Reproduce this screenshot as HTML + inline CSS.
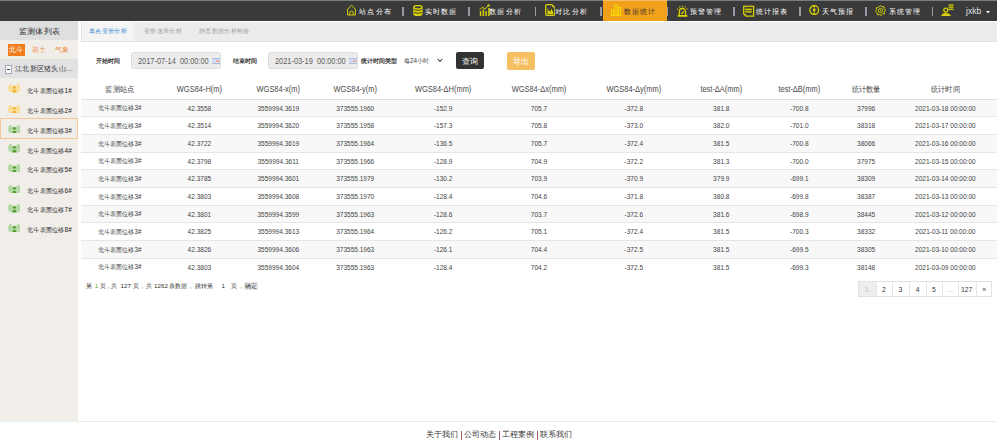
<!DOCTYPE html>
<html><head><meta charset="utf-8"><style>
*{margin:0;padding:0;box-sizing:border-box}
html,body{width:1000px;height:446px;overflow:hidden;background:#fff;font-family:"Liberation Sans",sans-serif;color:#333}
div,span,svg{position:absolute}
.nav{top:1.8px;height:20px;line-height:20px;font-size:7.2px;letter-spacing:1.2px;color:#fff;white-space:nowrap;margin-left:-0.3px}
.sep{top:7px;width:1.4px;height:9px;background:#9a9aa4;margin-left:-0.7px}
.t{white-space:nowrap}
#tbl div.c{text-align:center;white-space:nowrap}
</style></head><body>
<div style="left:0;top:0;width:997px;height:21px;background:#3a3a3a;border-top:1px solid #7b7c80"></div>
<div style="left:602.5px;top:0;width:64.5px;height:21px;background:#f3a01a;border-top:1px solid #f4bf6a"></div>
<div class="nav" style="left:359.5px;color:#fff">站点分布</div>
<div class="nav" style="left:425px;color:#fff">实时数据</div>
<div class="nav" style="left:489.5px;color:#fff">数据分析</div>
<div class="nav" style="left:555.5px;color:#fff">对比分析</div>
<div class="nav" style="left:624px;color:#333">数据统计</div>
<div class="nav" style="left:690px;color:#fff">预警管理</div>
<div class="nav" style="left:756px;color:#fff">统计报表</div>
<div class="nav" style="left:822px;color:#fff">天气预报</div>
<div class="nav" style="left:889px;color:#fff">系统管理</div>
<div class="sep" style="left:403px"></div>
<div class="sep" style="left:469px"></div>
<div class="sep" style="left:535.5px"></div>
<div class="sep" style="left:601px"></div>
<div class="sep" style="left:667.5px"></div>
<div class="sep" style="left:734px"></div>
<div class="sep" style="left:800px"></div>
<div class="sep" style="left:866px"></div>
<div class="sep" style="left:932.5px"></div>
<svg style="left:346px;top:4px" width="11" height="12" viewBox="0 0 11 12"><path d="M1 6 L5.5 1.2 L10 6 M1.6 5.4 V11 H9.4 V5.4 M3.8 11 V8 Q5.5 5.8 7.2 8 V11" fill="none" stroke="#d6d000" stroke-width="1"/></svg>
<svg style="left:413px;top:4.9px" width="9.8" height="10.9" viewBox="0 0 9.8 10.9"><rect x="0.1" y="0" width="9.6" height="10.9" rx="2.8" fill="#d6d000"/><ellipse cx="4.9" cy="2.2" rx="3.3" ry="0.95" fill="#3a3a3a"/><path d="M0.5 4.5 Q4.9 6.4 9.3 4.5 M0.5 7.4 Q4.9 9.3 9.3 7.4" fill="none" stroke="#3a3a3a" stroke-width="0.9"/></svg>
<svg style="left:479px;top:4px" width="11" height="12" viewBox="0 0 11 12"><path d="M0.5 6 L3.5 3 L6 5 L9.5 1.3" fill="none" stroke="#d6d000" stroke-width="1"/><circle cx="9.6" cy="1.4" r="1.2" fill="#d6d000"/><rect x="0.8" y="7" width="1.5" height="5" fill="#d6d000"/><rect x="3.6" y="5.3" width="1.5" height="6.7" fill="#d6d000"/><rect x="6.4" y="7" width="1.5" height="5" fill="#d6d000"/><rect x="9.2" y="4" width="1.5" height="8" fill="#d6d000"/></svg>
<svg style="left:544.6px;top:4px" width="10.6" height="12" viewBox="0 0 10.6 12"><path d="M1.9 0.7 H6.9 L9.9 3.7 V10.1 Q9.9 11.3 8.7 11.3 H1.9 Q0.7 11.3 0.7 10.1 V1.9 Q0.7 0.7 1.9 0.7 Z" fill="none" stroke="#d6d000" stroke-width="1.3"/><path d="M2.4 10.2 V4.8 L3.2 4.4 V7.4 L4.4 6.2 L5.4 8 L6.4 4.6 L8.4 8.6 V10.2 Z" fill="#d6d000"/><circle cx="7.6" cy="2.6" r="0.6" fill="#d6d000"/></svg>
<svg style="left:611px;top:4px" width="10" height="12" viewBox="0 0 10 12"><rect x="0.5" y="6" width="2.2" height="5.5" fill="none" stroke="#f5e400" stroke-width="0.9"/><rect x="3.9" y="1" width="2.2" height="10.5" fill="none" stroke="#f5e400" stroke-width="0.9"/><rect x="7.3" y="3.5" width="2.2" height="8" fill="none" stroke="#f5e400" stroke-width="0.9"/></svg>
<svg style="left:677px;top:5px" width="11" height="12" viewBox="0 0 11 12"><circle cx="2.6" cy="1.9" r="0.7" fill="#d6d000"/><circle cx="5.3" cy="1.5" r="0.7" fill="#d6d000"/><circle cx="8" cy="1.9" r="0.7" fill="#d6d000"/><circle cx="0.7" cy="3.9" r="0.7" fill="#d6d000"/><circle cx="9.9" cy="3.9" r="0.7" fill="#d6d000"/><path d="M2.3 10.2 V6.6 A3.1 3.1 0 0 1 8.5 6.6 V10.2" fill="none" stroke="#d6d000" stroke-width="1.3"/><path d="M3.9 7.6 L5.1 8.6 L6.9 6.1" fill="none" stroke="#d6d000" stroke-width="1.1"/><rect x="0.6" y="10" width="9.8" height="1.8" fill="#d6d000"/></svg>
<svg style="left:743px;top:5px" width="12" height="12" viewBox="0 0 12 12"><path d="M0.7 1.3 H10.6 V11.2 H3 L0.7 8.9 Z" fill="none" stroke="#d6d000" stroke-width="1.3"/><path d="M0.7 8.9 H3 V11.2 Z" fill="#d6d000"/><rect x="2.2" y="3.6" width="6.6" height="1.7" fill="#d6d000"/><rect x="2.2" y="6.2" width="6.6" height="1.4" fill="#d6d000"/><path d="M2.6 0 V2.3 M7.7 0 V2.3" stroke="#8aa02a" stroke-width="1"/><path d="M3.4 0.3 V2.3 M8.5 0.3 V2.3" stroke="#c88a20" stroke-width="0.7"/></svg>
<svg style="left:809.4px;top:4.8px" width="10.4" height="10.2" viewBox="0 0 10.4 10.2"><circle cx="5.2" cy="5.1" r="4.4" fill="none" stroke="#d6d000" stroke-width="1.3"/><circle cx="5.2" cy="5.1" r="1.5" fill="#d6d000"/><path d="M5.2 0.5 V9.7" stroke="#d6d000" stroke-width="0.9"/><circle cx="5.2" cy="0.9" r="0.9" fill="#d6d000"/><circle cx="5.2" cy="9.3" r="0.9" fill="#d6d000"/></svg>
<svg style="left:875px;top:5px" width="11" height="11" viewBox="0 0 11 11"><path d="M5.5 0.6 L7 1.8 L8.9 1.6 L9.2 3.5 L10.4 5 L9.5 6.6 L9.6 8.7 L7.6 9 L6.2 10.4 L4.5 9.6 L2.5 9.8 L2 7.9 L0.6 6.4 L1.4 4.7 L1.6 2.6 L3.6 2 Z" fill="none" stroke="#d6d000" stroke-width="1"/><circle cx="5.5" cy="5.6" r="2.2" fill="none" stroke="#d6d000" stroke-width="0.9"/><circle cx="5.5" cy="5.6" r="0.8" fill="#d6d000"/></svg>
<svg style="left:940.5px;top:3.5px" width="13" height="12.5" viewBox="0 0 13 12.5"><circle cx="4.8" cy="6.1" r="2" fill="none" stroke="#d6d000" stroke-width="1.3"/><path d="M0.3 12 Q0.8 9.2 4.8 9 Q8.8 9.2 10 12 Z" fill="#d6d000"/><rect x="7.5" y="0.4" width="5" height="1.3" fill="#d6d000"/><rect x="7.5" y="2.5" width="5" height="1.3" fill="#d6d000"/><rect x="7.5" y="4.6" width="5" height="1.3" fill="#d6d000"/></svg>
<div class="nav" style="left:966.3px;font-size:8.5px;letter-spacing:0;top:1px;color:#dfe4ea">jxkb</div>
<svg style="left:986px;top:10.5px" width="4" height="3" viewBox="0 0 4 3"><path d="M0 0 H4 L2 2.5 Z" fill="#fff"/></svg>
<div style="left:0;top:21px;width:78px;height:400px;background:#f1eeea"></div>
<div style="left:0;top:21px;width:78px;height:19px;background:#dfdfdf"></div>
<div class="t" style="left:18.6px;top:21.6px;height:19px;font-size:8.4px;letter-spacing:0.45px;line-height:19px;color:#2a2a2a">监测体列表</div>
<div style="left:8px;top:43.5px;width:16.5px;height:12px;background:#f07d1e"></div>
<div class="t" style="left:8px;top:43.5px;width:16.5px;height:12px;line-height:12px;font-size:6.8px;color:#fff;text-align:center">北斗</div>
<div class="t" style="left:31.5px;top:43.5px;width:14.5px;height:12px;line-height:12px;font-size:6.8px;color:#f0913c;text-align:center">岩土</div>
<div class="t" style="left:54.5px;top:43.5px;width:14.5px;height:12px;line-height:12px;font-size:6.8px;color:#f0913c;text-align:center">气象</div>
<div style="left:0;top:59px;width:78px;height:19px;background:#e2e2e3"></div>
<div style="left:5px;top:65px;width:7px;height:8.5px;border:1px solid #a8a8b8;background:#fafafa"></div>
<div style="left:6.8px;top:68.8px;width:3.4px;height:1px;background:#444"></div>
<div class="t" style="left:15px;font-size:7.35px;letter-spacing:0.3px;line-height:20px;top:58.6px;color:#333">江北新区猪头山...</div>
<svg style="left:7.6px;top:84.4px" width="12.8" height="8.6" viewBox="0 0 12.8 8.6"><ellipse cx="3" cy="4.1" rx="2.9" ry="4.1" fill="#f9dc95"/><ellipse cx="9.8" cy="4.1" rx="2.9" ry="4.1" fill="#f9dc95"/><path d="M3.8 -0.2 L6.4 4.4 L9 -0.2 M4.4 8.6 L3.6 6.5 M8.4 8.6 L9.2 6.5" fill="none" stroke="#f3f0ea" stroke-width="1.1"/><circle cx="6.4" cy="3.2" r="1.5" fill="#f2b32a"/><path d="M3.9 8.6 Q4.2 5.6 6.4 5.4 Q8.6 5.6 8.9 8.6 Z" fill="#f2b32a"/></svg>
<div class="t" style="left:27px;top:80.7px;font-size:6.4px;letter-spacing:0.25px;line-height:20px;font-weight:500;color:#222">北斗表面位移1#</div>
<svg style="left:7.6px;top:104.5px" width="12.8" height="8.6" viewBox="0 0 12.8 8.6"><ellipse cx="3" cy="4.1" rx="2.9" ry="4.1" fill="#f9dc95"/><ellipse cx="9.8" cy="4.1" rx="2.9" ry="4.1" fill="#f9dc95"/><path d="M3.8 -0.2 L6.4 4.4 L9 -0.2 M4.4 8.6 L3.6 6.5 M8.4 8.6 L9.2 6.5" fill="none" stroke="#f3f0ea" stroke-width="1.1"/><circle cx="6.4" cy="3.2" r="1.5" fill="#f2b32a"/><path d="M3.9 8.6 Q4.2 5.6 6.4 5.4 Q8.6 5.6 8.9 8.6 Z" fill="#f2b32a"/></svg>
<div class="t" style="left:27px;top:100.8px;font-size:6.4px;letter-spacing:0.25px;line-height:20px;font-weight:500;color:#222">北斗表面位移2#</div>
<div style="left:0;top:118.2px;width:77.5px;height:21px;border:1px solid #f4c69a"></div>
<svg style="left:7.6px;top:124.9px" width="12.8" height="8.6" viewBox="0 0 12.8 8.6"><ellipse cx="3" cy="4.1" rx="2.9" ry="4.1" fill="#b2d9a3"/><ellipse cx="9.8" cy="4.1" rx="2.9" ry="4.1" fill="#b2d9a3"/><path d="M3.8 -0.2 L6.4 4.4 L9 -0.2 M4.4 8.6 L3.6 6.5 M8.4 8.6 L9.2 6.5" fill="none" stroke="#f3f0ea" stroke-width="1.1"/><circle cx="6.4" cy="3.2" r="1.5" fill="#55a035"/><path d="M3.9 8.6 Q4.2 5.6 6.4 5.4 Q8.6 5.6 8.9 8.6 Z" fill="#55a035"/></svg>
<div class="t" style="left:27px;top:121.2px;font-size:6.4px;letter-spacing:0.25px;line-height:20px;font-weight:500;color:#222">北斗表面位移3#</div>
<svg style="left:7.6px;top:144.4px" width="12.8" height="8.6" viewBox="0 0 12.8 8.6"><ellipse cx="3" cy="4.1" rx="2.9" ry="4.1" fill="#b2d9a3"/><ellipse cx="9.8" cy="4.1" rx="2.9" ry="4.1" fill="#b2d9a3"/><path d="M3.8 -0.2 L6.4 4.4 L9 -0.2 M4.4 8.6 L3.6 6.5 M8.4 8.6 L9.2 6.5" fill="none" stroke="#f3f0ea" stroke-width="1.1"/><circle cx="6.4" cy="3.2" r="1.5" fill="#55a035"/><path d="M3.9 8.6 Q4.2 5.6 6.4 5.4 Q8.6 5.6 8.9 8.6 Z" fill="#55a035"/></svg>
<div class="t" style="left:27px;top:140.7px;font-size:6.4px;letter-spacing:0.25px;line-height:20px;font-weight:500;color:#222">北斗表面位移4#</div>
<svg style="left:7.6px;top:163.8px" width="12.8" height="8.6" viewBox="0 0 12.8 8.6"><ellipse cx="3" cy="4.1" rx="2.9" ry="4.1" fill="#b2d9a3"/><ellipse cx="9.8" cy="4.1" rx="2.9" ry="4.1" fill="#b2d9a3"/><path d="M3.8 -0.2 L6.4 4.4 L9 -0.2 M4.4 8.6 L3.6 6.5 M8.4 8.6 L9.2 6.5" fill="none" stroke="#f3f0ea" stroke-width="1.1"/><circle cx="6.4" cy="3.2" r="1.5" fill="#55a035"/><path d="M3.9 8.6 Q4.2 5.6 6.4 5.4 Q8.6 5.6 8.9 8.6 Z" fill="#55a035"/></svg>
<div class="t" style="left:27px;top:160.1px;font-size:6.4px;letter-spacing:0.25px;line-height:20px;font-weight:500;color:#222">北斗表面位移5#</div>
<svg style="left:7.6px;top:184.6px" width="12.8" height="8.6" viewBox="0 0 12.8 8.6"><ellipse cx="3" cy="4.1" rx="2.9" ry="4.1" fill="#b2d9a3"/><ellipse cx="9.8" cy="4.1" rx="2.9" ry="4.1" fill="#b2d9a3"/><path d="M3.8 -0.2 L6.4 4.4 L9 -0.2 M4.4 8.6 L3.6 6.5 M8.4 8.6 L9.2 6.5" fill="none" stroke="#f3f0ea" stroke-width="1.1"/><circle cx="6.4" cy="3.2" r="1.5" fill="#55a035"/><path d="M3.9 8.6 Q4.2 5.6 6.4 5.4 Q8.6 5.6 8.9 8.6 Z" fill="#55a035"/></svg>
<div class="t" style="left:27px;top:180.9px;font-size:6.4px;letter-spacing:0.25px;line-height:20px;font-weight:500;color:#222">北斗表面位移6#</div>
<svg style="left:7.6px;top:204.1px" width="12.8" height="8.6" viewBox="0 0 12.8 8.6"><ellipse cx="3" cy="4.1" rx="2.9" ry="4.1" fill="#b2d9a3"/><ellipse cx="9.8" cy="4.1" rx="2.9" ry="4.1" fill="#b2d9a3"/><path d="M3.8 -0.2 L6.4 4.4 L9 -0.2 M4.4 8.6 L3.6 6.5 M8.4 8.6 L9.2 6.5" fill="none" stroke="#f3f0ea" stroke-width="1.1"/><circle cx="6.4" cy="3.2" r="1.5" fill="#55a035"/><path d="M3.9 8.6 Q4.2 5.6 6.4 5.4 Q8.6 5.6 8.9 8.6 Z" fill="#55a035"/></svg>
<div class="t" style="left:27px;top:200.4px;font-size:6.4px;letter-spacing:0.25px;line-height:20px;font-weight:500;color:#222">北斗表面位移7#</div>
<svg style="left:7.6px;top:223.5px" width="12.8" height="8.6" viewBox="0 0 12.8 8.6"><ellipse cx="3" cy="4.1" rx="2.9" ry="4.1" fill="#b2d9a3"/><ellipse cx="9.8" cy="4.1" rx="2.9" ry="4.1" fill="#b2d9a3"/><path d="M3.8 -0.2 L6.4 4.4 L9 -0.2 M4.4 8.6 L3.6 6.5 M8.4 8.6 L9.2 6.5" fill="none" stroke="#f3f0ea" stroke-width="1.1"/><circle cx="6.4" cy="3.2" r="1.5" fill="#55a035"/><path d="M3.9 8.6 Q4.2 5.6 6.4 5.4 Q8.6 5.6 8.9 8.6 Z" fill="#55a035"/></svg>
<div class="t" style="left:27px;top:219.8px;font-size:6.4px;letter-spacing:0.25px;line-height:20px;font-weight:500;color:#222">北斗表面位移8#</div>
<div style="left:81px;top:22px;width:916px;height:20px;background:#ececec;border-bottom:1px solid #e2e2e2"></div>
<div style="left:81px;top:22px;width:53px;height:20px;background:#f4f4f4;border-left:1px solid #e4e4e4;border-bottom:1px solid #e2e2e2"></div>
<div class="t" style="left:89px;top:22px;height:18px;line-height:18px;font-size:6.35px;letter-spacing:0.33px;color:#3d8fd8">单点变形分析</div>
<div class="t" style="left:144px;top:22px;height:18px;line-height:18px;font-size:6.35px;letter-spacing:0.33px;color:#a0a0a0">变形速率分析</div>
<div class="t" style="left:199px;top:22px;height:18px;line-height:18px;font-size:6.35px;letter-spacing:0.33px;color:#a0a0a0">静态数据分析检验</div>
<div class="t" style="left:95.8px;top:54.5px;line-height:12px;font-size:6.3px;font-weight:bold;color:#333">开始时间</div>
<div style="left:131.2px;top:51.8px;width:90px;height:17.5px;background:#ececec;border:1px solid #dcdcdc;border-radius:2.5px"></div>
<div class="t" style="left:137.79999999999998px;top:52.7px;height:17.5px;line-height:17.5px;font-size:8.6px;color:#606060;transform:scaleX(0.86);transform-origin:0 50%;white-space:pre">2017-07-14  00:00:00</div>
<div style="left:212.2px;top:57.5px;width:7.7px;height:6.3px;background:#cddcf2;border-top:0.9px solid #a9bfe6;border-bottom:0.7px solid #b4bccb"></div>
<div style="left:216.39999999999998px;top:59.6px;width:2.8px;height:2.6px;border-radius:1px;background:#f2a48c"></div>
<div class="t" style="left:233.3px;top:54.5px;line-height:12px;font-size:6.3px;font-weight:bold;color:#333">结束时间</div>
<div style="left:268.2px;top:51.8px;width:90px;height:17.5px;background:#ececec;border:1px solid #dcdcdc;border-radius:2.5px"></div>
<div class="t" style="left:274.8px;top:52.7px;height:17.5px;line-height:17.5px;font-size:8.6px;color:#606060;transform:scaleX(0.86);transform-origin:0 50%;white-space:pre">2021-03-19  00:00:00</div>
<div style="left:349.2px;top:57.5px;width:7.7px;height:6.3px;background:#cddcf2;border-top:0.9px solid #a9bfe6;border-bottom:0.7px solid #b4bccb"></div>
<div style="left:353.4px;top:59.6px;width:2.8px;height:2.6px;border-radius:1px;background:#f2a48c"></div>
<div class="t" style="left:360.7px;top:54.5px;line-height:12px;font-size:6.3px;font-weight:bold;color:#333">统计时间类型</div>
<div class="t" style="left:404px;top:54.5px;line-height:12px;font-size:6.3px;color:#444">每24小时</div>
<svg style="left:436.5px;top:58px" width="6" height="5" viewBox="0 0 6 5"><path d="M0.8 1 L3 3.5 L5.2 1" fill="none" stroke="#333" stroke-width="1.1"/></svg>
<div class="t" style="left:456.3px;top:51.6px;width:28px;height:17.8px;background:#333;border-radius:2px;color:#fff;font-size:7.6px;line-height:19px;text-align:center">查询</div>
<div class="t" style="left:506.6px;top:51.6px;width:28.4px;height:18px;background:#f5c062;border-radius:2px;color:#fff;font-size:7.6px;line-height:19px;text-align:center">导出</div>
<div style="left:81px;top:99.30px;width:916px;height:17.50px;background:#f8f8f8"></div>
<div style="left:81px;top:134.47px;width:916px;height:17.68px;background:#f8f8f8"></div>
<div style="left:81px;top:169.82px;width:916px;height:17.68px;background:#f8f8f8"></div>
<div style="left:81px;top:205.18px;width:916px;height:17.68px;background:#f8f8f8"></div>
<div style="left:81px;top:240.53px;width:916px;height:17.67px;background:#f8f8f8"></div>
<div style="left:81px;top:98.80px;width:916px;height:1px;background:#e0e0e0"></div>
<div style="left:81px;top:116.30px;width:916px;height:1px;background:#e6e6e6"></div>
<div style="left:81px;top:133.97px;width:916px;height:1px;background:#e6e6e6"></div>
<div style="left:81px;top:151.65px;width:916px;height:1px;background:#e6e6e6"></div>
<div style="left:81px;top:169.32px;width:916px;height:1px;background:#e6e6e6"></div>
<div style="left:81px;top:187.00px;width:916px;height:1px;background:#e6e6e6"></div>
<div style="left:81px;top:204.68px;width:916px;height:1px;background:#e6e6e6"></div>
<div style="left:81px;top:222.35px;width:916px;height:1px;background:#e6e6e6"></div>
<div style="left:81px;top:240.03px;width:916px;height:1px;background:#e6e6e6"></div>
<div style="left:81px;top:257.70px;width:916px;height:1px;background:#e6e6e6"></div>
<div class="t" style="left:81px;top:81px;width:78.0px;height:18px;line-height:18px;font-size:8.2px;color:#4a4a4a;text-align:center;transform:scaleX(0.91)">监测站点</div>
<div class="t" style="left:159px;top:81px;width:80.8px;height:18px;line-height:18px;font-size:8.2px;color:#4a4a4a;text-align:center;transform:scaleX(0.91)">WGS84-H(m)</div>
<div class="t" style="left:239.8px;top:81px;width:76.6px;height:18px;line-height:18px;font-size:8.2px;color:#4a4a4a;text-align:center;transform:scaleX(0.91)">WGS84-x(m)</div>
<div class="t" style="left:316.4px;top:81px;width:78.4px;height:18px;line-height:18px;font-size:8.2px;color:#4a4a4a;text-align:center;transform:scaleX(0.91)">WGS84-y(m)</div>
<div class="t" style="left:394.8px;top:81px;width:96.4px;height:18px;line-height:18px;font-size:8.2px;color:#4a4a4a;text-align:center;transform:scaleX(0.91)">WGS84-ΔH(mm)</div>
<div class="t" style="left:491.2px;top:81px;width:96.0px;height:18px;line-height:18px;font-size:8.2px;color:#4a4a4a;text-align:center;transform:scaleX(0.91)">WGS84-Δx(mm)</div>
<div class="t" style="left:587.2px;top:81px;width:93.6px;height:18px;line-height:18px;font-size:8.2px;color:#4a4a4a;text-align:center;transform:scaleX(0.91)">WGS84-Δy(mm)</div>
<div class="t" style="left:680.8px;top:81px;width:80.6px;height:18px;line-height:18px;font-size:8.2px;color:#4a4a4a;text-align:center;transform:scaleX(0.91)">test-ΔA(mm)</div>
<div class="t" style="left:761.4px;top:81px;width:76.6px;height:18px;line-height:18px;font-size:8.2px;color:#4a4a4a;text-align:center;transform:scaleX(0.91)">test-ΔB(mm)</div>
<div class="t" style="left:838px;top:81px;width:56.2px;height:18px;line-height:18px;font-size:8.2px;color:#4a4a4a;text-align:center;transform:scaleX(0.91)">统计数量</div>
<div class="t" style="left:894.2px;top:81px;width:102.8px;height:18px;line-height:18px;font-size:8.2px;color:#4a4a4a;text-align:center;transform:scaleX(0.91)">统计时间</div>
<div class="t" style="left:81px;top:99.40px;width:78.0px;height:17.50px;line-height:17.50px;font-size:6.3px;color:#3a3a3a;text-align:center">北斗表面位移3#</div>
<div class="t" style="left:159px;top:100.80px;width:80.8px;height:17.50px;line-height:17.50px;font-size:7.1px;transform:scaleX(0.92);color:#444;text-align:center">42.3558</div>
<div class="t" style="left:239.8px;top:100.80px;width:76.6px;height:17.50px;line-height:17.50px;font-size:7.1px;transform:scaleX(0.92);color:#444;text-align:center">3559994.3619</div>
<div class="t" style="left:316.4px;top:100.80px;width:78.4px;height:17.50px;line-height:17.50px;font-size:7.1px;transform:scaleX(0.92);color:#444;text-align:center">373555.1960</div>
<div class="t" style="left:394.8px;top:100.80px;width:96.4px;height:17.50px;line-height:17.50px;font-size:7.1px;transform:scaleX(0.92);color:#444;text-align:center">-152.9</div>
<div class="t" style="left:491.2px;top:100.80px;width:96.0px;height:17.50px;line-height:17.50px;font-size:7.1px;transform:scaleX(0.92);color:#444;text-align:center">705.7</div>
<div class="t" style="left:587.2px;top:100.80px;width:93.6px;height:17.50px;line-height:17.50px;font-size:7.1px;transform:scaleX(0.92);color:#444;text-align:center">-372.8</div>
<div class="t" style="left:680.8px;top:100.80px;width:80.6px;height:17.50px;line-height:17.50px;font-size:7.1px;transform:scaleX(0.92);color:#444;text-align:center">381.8</div>
<div class="t" style="left:761.4px;top:100.80px;width:76.6px;height:17.50px;line-height:17.50px;font-size:7.1px;transform:scaleX(0.92);color:#444;text-align:center">-700.8</div>
<div class="t" style="left:838px;top:100.80px;width:56.2px;height:17.50px;line-height:17.50px;font-size:7.1px;transform:scaleX(0.92);color:#444;text-align:center">37996</div>
<div class="t" style="left:894.2px;top:100.80px;width:102.8px;height:17.50px;line-height:17.50px;font-size:7.1px;transform:scaleX(0.92);color:#444;text-align:center">2021-03-18 00:00:00</div>
<div class="t" style="left:81px;top:116.90px;width:78.0px;height:17.67px;line-height:17.67px;font-size:6.3px;color:#3a3a3a;text-align:center">北斗表面位移3#</div>
<div class="t" style="left:159px;top:118.30px;width:80.8px;height:17.67px;line-height:17.67px;font-size:7.1px;transform:scaleX(0.92);color:#444;text-align:center">42.3514</div>
<div class="t" style="left:239.8px;top:118.30px;width:76.6px;height:17.67px;line-height:17.67px;font-size:7.1px;transform:scaleX(0.92);color:#444;text-align:center">3559994.3620</div>
<div class="t" style="left:316.4px;top:118.30px;width:78.4px;height:17.67px;line-height:17.67px;font-size:7.1px;transform:scaleX(0.92);color:#444;text-align:center">373555.1958</div>
<div class="t" style="left:394.8px;top:118.30px;width:96.4px;height:17.67px;line-height:17.67px;font-size:7.1px;transform:scaleX(0.92);color:#444;text-align:center">-157.3</div>
<div class="t" style="left:491.2px;top:118.30px;width:96.0px;height:17.67px;line-height:17.67px;font-size:7.1px;transform:scaleX(0.92);color:#444;text-align:center">705.8</div>
<div class="t" style="left:587.2px;top:118.30px;width:93.6px;height:17.67px;line-height:17.67px;font-size:7.1px;transform:scaleX(0.92);color:#444;text-align:center">-373.0</div>
<div class="t" style="left:680.8px;top:118.30px;width:80.6px;height:17.67px;line-height:17.67px;font-size:7.1px;transform:scaleX(0.92);color:#444;text-align:center">382.0</div>
<div class="t" style="left:761.4px;top:118.30px;width:76.6px;height:17.67px;line-height:17.67px;font-size:7.1px;transform:scaleX(0.92);color:#444;text-align:center">-701.0</div>
<div class="t" style="left:838px;top:118.30px;width:56.2px;height:17.67px;line-height:17.67px;font-size:7.1px;transform:scaleX(0.92);color:#444;text-align:center">38318</div>
<div class="t" style="left:894.2px;top:118.30px;width:102.8px;height:17.67px;line-height:17.67px;font-size:7.1px;transform:scaleX(0.92);color:#444;text-align:center">2021-03-17 00:00:00</div>
<div class="t" style="left:81px;top:134.57px;width:78.0px;height:17.68px;line-height:17.68px;font-size:6.3px;color:#3a3a3a;text-align:center">北斗表面位移3#</div>
<div class="t" style="left:159px;top:135.97px;width:80.8px;height:17.68px;line-height:17.68px;font-size:7.1px;transform:scaleX(0.92);color:#444;text-align:center">42.3722</div>
<div class="t" style="left:239.8px;top:135.97px;width:76.6px;height:17.68px;line-height:17.68px;font-size:7.1px;transform:scaleX(0.92);color:#444;text-align:center">3559994.3619</div>
<div class="t" style="left:316.4px;top:135.97px;width:78.4px;height:17.68px;line-height:17.68px;font-size:7.1px;transform:scaleX(0.92);color:#444;text-align:center">373555.1964</div>
<div class="t" style="left:394.8px;top:135.97px;width:96.4px;height:17.68px;line-height:17.68px;font-size:7.1px;transform:scaleX(0.92);color:#444;text-align:center">-136.5</div>
<div class="t" style="left:491.2px;top:135.97px;width:96.0px;height:17.68px;line-height:17.68px;font-size:7.1px;transform:scaleX(0.92);color:#444;text-align:center">705.7</div>
<div class="t" style="left:587.2px;top:135.97px;width:93.6px;height:17.68px;line-height:17.68px;font-size:7.1px;transform:scaleX(0.92);color:#444;text-align:center">-372.4</div>
<div class="t" style="left:680.8px;top:135.97px;width:80.6px;height:17.68px;line-height:17.68px;font-size:7.1px;transform:scaleX(0.92);color:#444;text-align:center">381.5</div>
<div class="t" style="left:761.4px;top:135.97px;width:76.6px;height:17.68px;line-height:17.68px;font-size:7.1px;transform:scaleX(0.92);color:#444;text-align:center">-700.8</div>
<div class="t" style="left:838px;top:135.97px;width:56.2px;height:17.68px;line-height:17.68px;font-size:7.1px;transform:scaleX(0.92);color:#444;text-align:center">38066</div>
<div class="t" style="left:894.2px;top:135.97px;width:102.8px;height:17.68px;line-height:17.68px;font-size:7.1px;transform:scaleX(0.92);color:#444;text-align:center">2021-03-16 00:00:00</div>
<div class="t" style="left:81px;top:152.25px;width:78.0px;height:17.67px;line-height:17.67px;font-size:6.3px;color:#3a3a3a;text-align:center">北斗表面位移3#</div>
<div class="t" style="left:159px;top:153.65px;width:80.8px;height:17.67px;line-height:17.67px;font-size:7.1px;transform:scaleX(0.92);color:#444;text-align:center">42.3798</div>
<div class="t" style="left:239.8px;top:153.65px;width:76.6px;height:17.67px;line-height:17.67px;font-size:7.1px;transform:scaleX(0.92);color:#444;text-align:center">3559994.3611</div>
<div class="t" style="left:316.4px;top:153.65px;width:78.4px;height:17.67px;line-height:17.67px;font-size:7.1px;transform:scaleX(0.92);color:#444;text-align:center">373555.1966</div>
<div class="t" style="left:394.8px;top:153.65px;width:96.4px;height:17.67px;line-height:17.67px;font-size:7.1px;transform:scaleX(0.92);color:#444;text-align:center">-128.9</div>
<div class="t" style="left:491.2px;top:153.65px;width:96.0px;height:17.67px;line-height:17.67px;font-size:7.1px;transform:scaleX(0.92);color:#444;text-align:center">704.9</div>
<div class="t" style="left:587.2px;top:153.65px;width:93.6px;height:17.67px;line-height:17.67px;font-size:7.1px;transform:scaleX(0.92);color:#444;text-align:center">-372.2</div>
<div class="t" style="left:680.8px;top:153.65px;width:80.6px;height:17.67px;line-height:17.67px;font-size:7.1px;transform:scaleX(0.92);color:#444;text-align:center">381.3</div>
<div class="t" style="left:761.4px;top:153.65px;width:76.6px;height:17.67px;line-height:17.67px;font-size:7.1px;transform:scaleX(0.92);color:#444;text-align:center">-700.0</div>
<div class="t" style="left:838px;top:153.65px;width:56.2px;height:17.67px;line-height:17.67px;font-size:7.1px;transform:scaleX(0.92);color:#444;text-align:center">37975</div>
<div class="t" style="left:894.2px;top:153.65px;width:102.8px;height:17.67px;line-height:17.67px;font-size:7.1px;transform:scaleX(0.92);color:#444;text-align:center">2021-03-15 00:00:00</div>
<div class="t" style="left:81px;top:169.92px;width:78.0px;height:17.68px;line-height:17.68px;font-size:6.3px;color:#3a3a3a;text-align:center">北斗表面位移3#</div>
<div class="t" style="left:159px;top:171.32px;width:80.8px;height:17.68px;line-height:17.68px;font-size:7.1px;transform:scaleX(0.92);color:#444;text-align:center">42.3785</div>
<div class="t" style="left:239.8px;top:171.32px;width:76.6px;height:17.68px;line-height:17.68px;font-size:7.1px;transform:scaleX(0.92);color:#444;text-align:center">3559994.3601</div>
<div class="t" style="left:316.4px;top:171.32px;width:78.4px;height:17.68px;line-height:17.68px;font-size:7.1px;transform:scaleX(0.92);color:#444;text-align:center">373555.1979</div>
<div class="t" style="left:394.8px;top:171.32px;width:96.4px;height:17.68px;line-height:17.68px;font-size:7.1px;transform:scaleX(0.92);color:#444;text-align:center">-130.2</div>
<div class="t" style="left:491.2px;top:171.32px;width:96.0px;height:17.68px;line-height:17.68px;font-size:7.1px;transform:scaleX(0.92);color:#444;text-align:center">703.9</div>
<div class="t" style="left:587.2px;top:171.32px;width:93.6px;height:17.68px;line-height:17.68px;font-size:7.1px;transform:scaleX(0.92);color:#444;text-align:center">-370.9</div>
<div class="t" style="left:680.8px;top:171.32px;width:80.6px;height:17.68px;line-height:17.68px;font-size:7.1px;transform:scaleX(0.92);color:#444;text-align:center">379.9</div>
<div class="t" style="left:761.4px;top:171.32px;width:76.6px;height:17.68px;line-height:17.68px;font-size:7.1px;transform:scaleX(0.92);color:#444;text-align:center">-699.1</div>
<div class="t" style="left:838px;top:171.32px;width:56.2px;height:17.68px;line-height:17.68px;font-size:7.1px;transform:scaleX(0.92);color:#444;text-align:center">38309</div>
<div class="t" style="left:894.2px;top:171.32px;width:102.8px;height:17.68px;line-height:17.68px;font-size:7.1px;transform:scaleX(0.92);color:#444;text-align:center">2021-03-14 00:00:00</div>
<div class="t" style="left:81px;top:187.60px;width:78.0px;height:17.68px;line-height:17.68px;font-size:6.3px;color:#3a3a3a;text-align:center">北斗表面位移3#</div>
<div class="t" style="left:159px;top:189.00px;width:80.8px;height:17.68px;line-height:17.68px;font-size:7.1px;transform:scaleX(0.92);color:#444;text-align:center">42.3803</div>
<div class="t" style="left:239.8px;top:189.00px;width:76.6px;height:17.68px;line-height:17.68px;font-size:7.1px;transform:scaleX(0.92);color:#444;text-align:center">3559994.3608</div>
<div class="t" style="left:316.4px;top:189.00px;width:78.4px;height:17.68px;line-height:17.68px;font-size:7.1px;transform:scaleX(0.92);color:#444;text-align:center">373555.1970</div>
<div class="t" style="left:394.8px;top:189.00px;width:96.4px;height:17.68px;line-height:17.68px;font-size:7.1px;transform:scaleX(0.92);color:#444;text-align:center">-128.4</div>
<div class="t" style="left:491.2px;top:189.00px;width:96.0px;height:17.68px;line-height:17.68px;font-size:7.1px;transform:scaleX(0.92);color:#444;text-align:center">704.6</div>
<div class="t" style="left:587.2px;top:189.00px;width:93.6px;height:17.68px;line-height:17.68px;font-size:7.1px;transform:scaleX(0.92);color:#444;text-align:center">-371.8</div>
<div class="t" style="left:680.8px;top:189.00px;width:80.6px;height:17.68px;line-height:17.68px;font-size:7.1px;transform:scaleX(0.92);color:#444;text-align:center">380.8</div>
<div class="t" style="left:761.4px;top:189.00px;width:76.6px;height:17.68px;line-height:17.68px;font-size:7.1px;transform:scaleX(0.92);color:#444;text-align:center">-699.8</div>
<div class="t" style="left:838px;top:189.00px;width:56.2px;height:17.68px;line-height:17.68px;font-size:7.1px;transform:scaleX(0.92);color:#444;text-align:center">38387</div>
<div class="t" style="left:894.2px;top:189.00px;width:102.8px;height:17.68px;line-height:17.68px;font-size:7.1px;transform:scaleX(0.92);color:#444;text-align:center">2021-03-13 00:00:00</div>
<div class="t" style="left:81px;top:205.28px;width:78.0px;height:17.68px;line-height:17.68px;font-size:6.3px;color:#3a3a3a;text-align:center">北斗表面位移3#</div>
<div class="t" style="left:159px;top:206.68px;width:80.8px;height:17.68px;line-height:17.68px;font-size:7.1px;transform:scaleX(0.92);color:#444;text-align:center">42.3801</div>
<div class="t" style="left:239.8px;top:206.68px;width:76.6px;height:17.68px;line-height:17.68px;font-size:7.1px;transform:scaleX(0.92);color:#444;text-align:center">3559994.3599</div>
<div class="t" style="left:316.4px;top:206.68px;width:78.4px;height:17.68px;line-height:17.68px;font-size:7.1px;transform:scaleX(0.92);color:#444;text-align:center">373555.1963</div>
<div class="t" style="left:394.8px;top:206.68px;width:96.4px;height:17.68px;line-height:17.68px;font-size:7.1px;transform:scaleX(0.92);color:#444;text-align:center">-128.6</div>
<div class="t" style="left:491.2px;top:206.68px;width:96.0px;height:17.68px;line-height:17.68px;font-size:7.1px;transform:scaleX(0.92);color:#444;text-align:center">703.7</div>
<div class="t" style="left:587.2px;top:206.68px;width:93.6px;height:17.68px;line-height:17.68px;font-size:7.1px;transform:scaleX(0.92);color:#444;text-align:center">-372.6</div>
<div class="t" style="left:680.8px;top:206.68px;width:80.6px;height:17.68px;line-height:17.68px;font-size:7.1px;transform:scaleX(0.92);color:#444;text-align:center">381.6</div>
<div class="t" style="left:761.4px;top:206.68px;width:76.6px;height:17.68px;line-height:17.68px;font-size:7.1px;transform:scaleX(0.92);color:#444;text-align:center">-698.9</div>
<div class="t" style="left:838px;top:206.68px;width:56.2px;height:17.68px;line-height:17.68px;font-size:7.1px;transform:scaleX(0.92);color:#444;text-align:center">38445</div>
<div class="t" style="left:894.2px;top:206.68px;width:102.8px;height:17.68px;line-height:17.68px;font-size:7.1px;transform:scaleX(0.92);color:#444;text-align:center">2021-03-12 00:00:00</div>
<div class="t" style="left:81px;top:222.95px;width:78.0px;height:17.67px;line-height:17.67px;font-size:6.3px;color:#3a3a3a;text-align:center">北斗表面位移3#</div>
<div class="t" style="left:159px;top:224.35px;width:80.8px;height:17.67px;line-height:17.67px;font-size:7.1px;transform:scaleX(0.92);color:#444;text-align:center">42.3825</div>
<div class="t" style="left:239.8px;top:224.35px;width:76.6px;height:17.67px;line-height:17.67px;font-size:7.1px;transform:scaleX(0.92);color:#444;text-align:center">3559994.3613</div>
<div class="t" style="left:316.4px;top:224.35px;width:78.4px;height:17.67px;line-height:17.67px;font-size:7.1px;transform:scaleX(0.92);color:#444;text-align:center">373555.1964</div>
<div class="t" style="left:394.8px;top:224.35px;width:96.4px;height:17.67px;line-height:17.67px;font-size:7.1px;transform:scaleX(0.92);color:#444;text-align:center">-126.2</div>
<div class="t" style="left:491.2px;top:224.35px;width:96.0px;height:17.67px;line-height:17.67px;font-size:7.1px;transform:scaleX(0.92);color:#444;text-align:center">705.1</div>
<div class="t" style="left:587.2px;top:224.35px;width:93.6px;height:17.67px;line-height:17.67px;font-size:7.1px;transform:scaleX(0.92);color:#444;text-align:center">-372.4</div>
<div class="t" style="left:680.8px;top:224.35px;width:80.6px;height:17.67px;line-height:17.67px;font-size:7.1px;transform:scaleX(0.92);color:#444;text-align:center">381.5</div>
<div class="t" style="left:761.4px;top:224.35px;width:76.6px;height:17.67px;line-height:17.67px;font-size:7.1px;transform:scaleX(0.92);color:#444;text-align:center">-700.3</div>
<div class="t" style="left:838px;top:224.35px;width:56.2px;height:17.67px;line-height:17.67px;font-size:7.1px;transform:scaleX(0.92);color:#444;text-align:center">38332</div>
<div class="t" style="left:894.2px;top:224.35px;width:102.8px;height:17.67px;line-height:17.67px;font-size:7.1px;transform:scaleX(0.92);color:#444;text-align:center">2021-03-11 00:00:00</div>
<div class="t" style="left:81px;top:240.62px;width:78.0px;height:17.67px;line-height:17.67px;font-size:6.3px;color:#3a3a3a;text-align:center">北斗表面位移3#</div>
<div class="t" style="left:159px;top:242.03px;width:80.8px;height:17.67px;line-height:17.67px;font-size:7.1px;transform:scaleX(0.92);color:#444;text-align:center">42.3826</div>
<div class="t" style="left:239.8px;top:242.03px;width:76.6px;height:17.67px;line-height:17.67px;font-size:7.1px;transform:scaleX(0.92);color:#444;text-align:center">3559994.3606</div>
<div class="t" style="left:316.4px;top:242.03px;width:78.4px;height:17.67px;line-height:17.67px;font-size:7.1px;transform:scaleX(0.92);color:#444;text-align:center">373555.1963</div>
<div class="t" style="left:394.8px;top:242.03px;width:96.4px;height:17.67px;line-height:17.67px;font-size:7.1px;transform:scaleX(0.92);color:#444;text-align:center">-126.1</div>
<div class="t" style="left:491.2px;top:242.03px;width:96.0px;height:17.67px;line-height:17.67px;font-size:7.1px;transform:scaleX(0.92);color:#444;text-align:center">704.4</div>
<div class="t" style="left:587.2px;top:242.03px;width:93.6px;height:17.67px;line-height:17.67px;font-size:7.1px;transform:scaleX(0.92);color:#444;text-align:center">-372.5</div>
<div class="t" style="left:680.8px;top:242.03px;width:80.6px;height:17.67px;line-height:17.67px;font-size:7.1px;transform:scaleX(0.92);color:#444;text-align:center">381.5</div>
<div class="t" style="left:761.4px;top:242.03px;width:76.6px;height:17.67px;line-height:17.67px;font-size:7.1px;transform:scaleX(0.92);color:#444;text-align:center">-699.5</div>
<div class="t" style="left:838px;top:242.03px;width:56.2px;height:17.67px;line-height:17.67px;font-size:7.1px;transform:scaleX(0.92);color:#444;text-align:center">38305</div>
<div class="t" style="left:894.2px;top:242.03px;width:102.8px;height:17.67px;line-height:17.67px;font-size:7.1px;transform:scaleX(0.92);color:#444;text-align:center">2021-03-10 00:00:00</div>
<div class="t" style="left:81px;top:258.30px;width:78.0px;height:17.68px;line-height:17.68px;font-size:6.3px;color:#3a3a3a;text-align:center">北斗表面位移3#</div>
<div class="t" style="left:159px;top:259.70px;width:80.8px;height:17.68px;line-height:17.68px;font-size:7.1px;transform:scaleX(0.92);color:#444;text-align:center">42.3803</div>
<div class="t" style="left:239.8px;top:259.70px;width:76.6px;height:17.68px;line-height:17.68px;font-size:7.1px;transform:scaleX(0.92);color:#444;text-align:center">3559994.3604</div>
<div class="t" style="left:316.4px;top:259.70px;width:78.4px;height:17.68px;line-height:17.68px;font-size:7.1px;transform:scaleX(0.92);color:#444;text-align:center">373555.1963</div>
<div class="t" style="left:394.8px;top:259.70px;width:96.4px;height:17.68px;line-height:17.68px;font-size:7.1px;transform:scaleX(0.92);color:#444;text-align:center">-128.4</div>
<div class="t" style="left:491.2px;top:259.70px;width:96.0px;height:17.68px;line-height:17.68px;font-size:7.1px;transform:scaleX(0.92);color:#444;text-align:center">704.2</div>
<div class="t" style="left:587.2px;top:259.70px;width:93.6px;height:17.68px;line-height:17.68px;font-size:7.1px;transform:scaleX(0.92);color:#444;text-align:center">-372.5</div>
<div class="t" style="left:680.8px;top:259.70px;width:80.6px;height:17.68px;line-height:17.68px;font-size:7.1px;transform:scaleX(0.92);color:#444;text-align:center">381.5</div>
<div class="t" style="left:761.4px;top:259.70px;width:76.6px;height:17.68px;line-height:17.68px;font-size:7.1px;transform:scaleX(0.92);color:#444;text-align:center">-699.3</div>
<div class="t" style="left:838px;top:259.70px;width:56.2px;height:17.68px;line-height:17.68px;font-size:7.1px;transform:scaleX(0.92);color:#444;text-align:center">38148</div>
<div class="t" style="left:894.2px;top:259.70px;width:102.8px;height:17.68px;line-height:17.68px;font-size:7.1px;transform:scaleX(0.92);color:#444;text-align:center">2021-03-09 00:00:00</div>
<div class="t" style="left:85.7px;top:280px;line-height:12px;font-size:6.2px;color:#333">第</div>
<div class="t" style="left:94.8px;top:280px;line-height:12px;font-size:6.2px;color:#6aa830">1</div>
<div class="t" style="left:99.6px;top:280px;line-height:12px;font-size:6.2px;color:#333">页</div>
<div class="t" style="left:107.8px;top:280px;line-height:12px;font-size:6.2px;color:#333">,</div>
<div class="t" style="left:111.4px;top:280px;line-height:12px;font-size:6.2px;color:#333">共</div>
<div class="t" style="left:120.5px;top:280px;line-height:12px;font-size:6.2px;color:#333">127</div>
<div class="t" style="left:133.2px;top:280px;line-height:12px;font-size:6.2px;color:#333">页</div>
<div class="t" style="left:141.6px;top:280px;line-height:12px;font-size:6.2px;color:#333">,</div>
<div class="t" style="left:145.5px;top:280px;line-height:12px;font-size:6.2px;color:#333">共</div>
<div class="t" style="left:154.1px;top:280px;line-height:12px;font-size:6.2px;color:#333">1262</div>
<div class="t" style="left:169.3px;top:280px;line-height:12px;font-size:6.2px;color:#333">条数据</div>
<div class="t" style="left:189.8px;top:280px;line-height:12px;font-size:6.2px;color:#333">,</div>
<div class="t" style="left:195px;top:280px;line-height:12px;font-size:6.2px;color:#333">跳转第</div>
<div class="t" style="left:221.5px;top:280px;line-height:12px;font-size:6.2px;color:#333">1</div>
<div class="t" style="left:231.4px;top:280px;line-height:12px;font-size:6.2px;color:#333">页</div>
<div class="t" style="left:240.2px;top:280px;line-height:12px;font-size:6.2px;color:#333">,</div>
<div class="t" style="left:243.8px;top:282.2px;width:14px;height:7.6px;background:#e9e9e9;line-height:7.6px;font-size:6.2px;color:#333;text-align:center">确定</div>
<div style="left:858px;top:281.2px;width:134px;height:15.6px;border:1px solid #e2e2e2"></div>
<div style="left:859px;top:282.2px;width:16.5px;height:13.6px;background:#eee"></div>
<div class="t" style="left:858px;top:282px;width:17.5px;height:15.2px;line-height:15.2px;font-size:8px;transform:scaleX(0.85);color:#c0c0c0;text-align:center">1</div>
<div style="left:875.5px;top:282.2px;width:1px;height:13.6px;background:#e6e6e6"></div>
<div class="t" style="left:875.5px;top:282px;width:16.0px;height:15.2px;line-height:15.2px;font-size:8px;transform:scaleX(0.85);color:#333;text-align:center">2</div>
<div style="left:891.5px;top:282.2px;width:1px;height:13.6px;background:#e6e6e6"></div>
<div class="t" style="left:891.5px;top:282px;width:17.0px;height:15.2px;line-height:15.2px;font-size:8px;transform:scaleX(0.85);color:#333;text-align:center">3</div>
<div style="left:908.5px;top:282.2px;width:1px;height:13.6px;background:#e6e6e6"></div>
<div class="t" style="left:908.5px;top:282px;width:17.1px;height:15.2px;line-height:15.2px;font-size:8px;transform:scaleX(0.85);color:#333;text-align:center">4</div>
<div style="left:925.6px;top:282.2px;width:1px;height:13.6px;background:#e6e6e6"></div>
<div class="t" style="left:925.6px;top:282px;width:16.0px;height:15.2px;line-height:15.2px;font-size:8px;transform:scaleX(0.85);color:#333;text-align:center">5</div>
<div style="left:941.6px;top:282.2px;width:1px;height:13.6px;background:#e6e6e6"></div>
<div class="t" style="left:941.6px;top:282px;width:16.8px;height:15.2px;line-height:15.2px;font-size:8px;transform:scaleX(0.85);color:#9cc28a;text-align:center">…</div>
<div style="left:958.4px;top:282.2px;width:1px;height:13.6px;background:#e6e6e6"></div>
<div class="t" style="left:958.4px;top:282px;width:17.3px;height:15.2px;line-height:15.2px;font-size:8px;transform:scaleX(0.85);color:#333;text-align:center">127</div>
<div style="left:975.7px;top:282.2px;width:1px;height:13.6px;background:#e6e6e6"></div>
<div class="t" style="left:975.7px;top:282px;width:16.3px;height:15.2px;line-height:15.2px;font-size:8px;transform:scaleX(0.85);color:#333;text-align:center">»</div>
<div style="left:0;top:421px;width:997px;height:1px;background:#e6eded"></div>
<div class="t" style="left:426.4px;top:429px;line-height:12px;font-size:7.75px;color:#333">关于我们</div>
<div class="t" style="left:464px;top:429px;line-height:12px;font-size:7.75px;color:#333">公司动态</div>
<div class="t" style="left:502.4px;top:429px;line-height:12px;font-size:7.75px;color:#333">工程案例</div>
<div class="t" style="left:540.3px;top:429px;line-height:12px;font-size:7.75px;color:#333">联系我们</div>
<div style="left:460.8px;top:431px;width:0.9px;height:8.5px;background:#9a5a6a"></div>
<div style="left:498.9px;top:431px;width:0.9px;height:8.5px;background:#9a5a6a"></div>
<div style="left:537px;top:431px;width:0.9px;height:8.5px;background:#9a5a6a"></div>
</body></html>
